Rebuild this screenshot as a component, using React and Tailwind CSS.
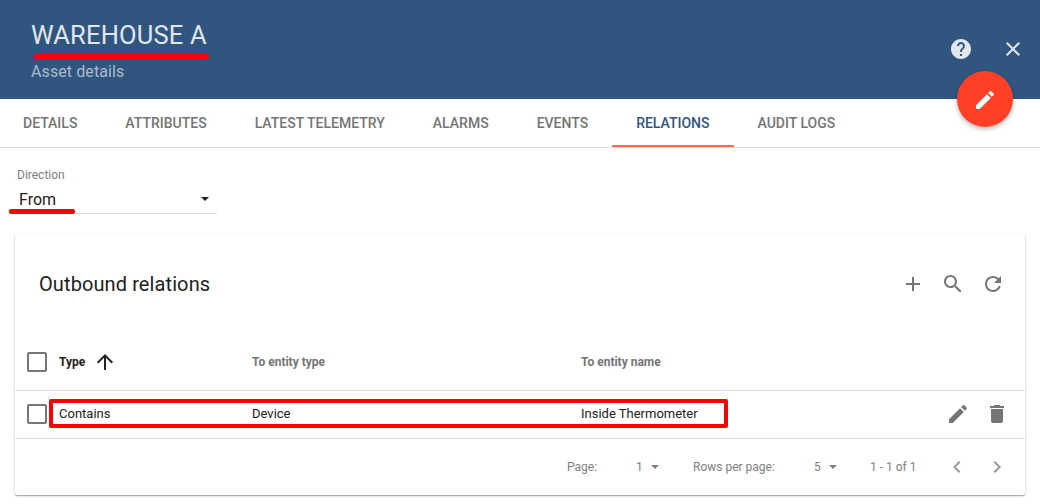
const paths = {
  help: 'M12 2C6.48 2 2 6.48 2 12s4.48 10 10 10 10-4.480 10-10S17.520 2 12 2zm1 17h-2v-2h2v2zm2.070-7.750l-.9.920C13.450 12.900 13 13.500 13 15h-2v-.5c0-1.100.450-2.100 1.170-2.830l1.240-1.260c.370-.360.590-.860.590-1.410 0-1.100-.9-2-2-2s-2 .9-2 2H8c0-2.210 1.790-4 4-4s4 1.790 4 4c0 .880-.360 1.680-.930 2.250z',
  close: 'M19 6.410L17.590 5 12 10.590 6.410 5 5 6.410 10.590 12 5 17.590 6.410 19 12 13.410 17.590 19 19 17.590 13.410 12z',
  edit: 'M3 17.250V21h3.750L17.810 9.940l-3.750-3.750L3 17.250zM20.710 7.040c.390-.390.390-1.020 0-1.410l-2.340-2.340c-.390-.390-1.020-.390-1.410 0l-1.830 1.830 3.750 3.750 1.830-1.830z',
  add: 'M19 13h-6v6h-2v-6H5v-2h6V5h2v6h6v2z',
  search: 'M15.5 14h-.79l-.28-.27C15.41 12.59 16 11.11 16 9.5 16 5.91 13.09 3 9.5 3S3 5.91 3 9.5 5.91 16 9.5 16c1.61 0 3.09-.59 4.23-1.57l.27.28v.79l5 4.99L20.49 19l-4.99-5zm-6 0C7.01 14 5 11.99 5 9.5S7.01 5 9.5 5 14 7.01 14 9.5 11.99 14 9.5 14z',
  refresh: 'M17.65 6.35C16.2 4.9 14.21 4 12 4c-4.42 0-7.99 3.58-7.99 8s3.57 8 7.99 8c3.73 0 6.84-2.55 7.73-6h-2.08c-.82 2.33-3.04 4-5.65 4-3.31 0-6-2.69-6-6s2.69-6 6-6c1.66 0 3.14.69 4.22 1.78L13 11h7V4l-2.35 2.35z',
  del: 'M6 19c0 1.1.9 2 2 2h8c1.1 0 2-.9 2-2V7H6v12zM19 4h-3.500l-1-1h-5l-1 1H5v2h14V4z',
  up: 'M4 12l1.410 1.410L11 7.830V20h2V7.830l5.580 5.590L20 12l-8-8-8 8z',
  left: 'M15.410 7.410L14 6l-6 6 6 6 1.410-1.410L10.830 12z',
  right: 'M10 6L8.590 7.410 13.170 12l-4.580 4.590L10 18l6-6z',
};

function Icon({ name, className = 'size-6' }) {
  return (
    <svg viewBox="0 0 24 24" fill="currentColor" className={`shrink-0 ${className}`}>
      <path d={paths[name]} />
    </svg>
  );
}

function Caret() {
  return (
    <svg viewBox="0 0 8 4" fill="currentColor" className="h-1 w-2 shrink-0">
      <path d="M0 0h8L4 4z" />
    </svg>
  );
}

function Checkbox() {
  return <span className="size-5 shrink-0 rounded-[2px] border-2 border-[#757575]" />;
}

const tabs = ['DETAILS', 'ATTRIBUTES', 'LATEST TELEMETRY', 'ALARMS', 'EVENTS', 'RELATIONS', 'AUDIT LOGS'];

export default function App() {
  return (
    <div className="h-[504px] w-[1040px] overflow-hidden bg-white font-['Roboto',sans-serif] text-[#212121]">
      <header className="relative flex h-[99px] justify-between bg-[#305680] pl-[31px] pr-[15px]">
        <div className="flex flex-col pt-[19px]">
          <h1 className="relative text-[25.500px] leading-8 tracking-[0.18px] text-[#e0e6ec]">
            WAREHOUSE A
            <span className="absolute left-[3px] top-[35px] h-[5px] w-[175px] rounded-[2px] bg-[#ff0000]" />
          </h1>
          <p className="mt-[11px] text-base leading-5 tracking-[0.1px] text-[#acbbcc]">Asset details</p>
        </div>
        <div className="flex items-center gap-7 pb-0.5 text-[#e0e6ec]">
          <Icon name="help" />
          <Icon name="close" />
        </div>
        <button className="absolute right-[27px] top-[71px] flex size-14 items-center justify-center rounded-full bg-[#ff4026] pt-0.5 text-white shadow-[0_2px_5px_rgba(0,0,0,0.3)]">
          <Icon name="edit" />
        </button>
      </header>

      <nav className="flex h-[49px] border-b border-[#dddddd] text-sm font-medium">
        {tabs.map((t, i) => (
          <div
            key={t}
            className={`flex items-center ${i === 0 ? 'pl-[23px] pr-6' : 'px-6'} ${
              t === 'RELATIONS' ? 'border-b-2 border-[#ff6e4c] pt-0.5 text-[#305680]' : 'text-[#757575]'
            }`}
          >
            {t}
          </div>
        ))}
      </nav>

      <section className="flex h-[86px] flex-col pl-[9px] pt-[19px]">
        <label className="pl-2 text-xs leading-4 text-[#808080]">Direction</label>
        <div className="relative flex h-[31px] w-[208px] items-center justify-between pl-[10px] pr-2 pt-[3px]">
          <span className="text-base">From</span>
          <span className="pb-0.5"><Caret /></span>
          <span className="absolute bottom-0 left-2 right-0 h-px bg-[#dddddd]" />
          <span className="absolute bottom-0 left-0 h-[5px] w-[66px] rounded-[2px] bg-[#ff0000]" />
        </div>
      </section>

      <main className="ml-[15px] h-[261px] w-[1010px] rounded-[2px] bg-white shadow-[0_1px_3px_rgba(0,0,0,0.2),0_1px_1px_rgba(0,0,0,0.14),0_2px_1px_-1px_rgba(0,0,0,0.12)]">
        <div className="flex h-[100px] items-center justify-between pl-6 pr-5">
          <h2 className="text-xl tracking-[0.1px]">Outbound relations</h2>
          <div className="flex gap-4 text-[#757575]">
            <Icon name="add" />
            <Icon name="search" />
            <Icon name="refresh" />
          </div>
        </div>

        <div className="flex h-[57px] items-center border-b border-[#dddddd] pl-3 text-xs font-bold text-[#757575]">
          <Checkbox />
          <div className="flex w-[205px] items-center gap-2 pl-3 text-[#212121]">
            Type
            <Icon name="up" />
          </div>
          <div className="w-[329px]">To entity type</div>
          <div>To entity name</div>
        </div>

        <div className="relative flex h-12 items-center border-b border-[#dddddd] pb-px pl-3 pr-4 text-[13px]">
          <Checkbox />
          <div className="w-[205px] pl-3">Contains</div>
          <div className="w-[329px]">Device</div>
          <div>Inside Thermometer</div>
          <div className="ml-auto flex gap-[15px] text-[#757575]">
            <Icon name="edit" />
            <Icon name="del" />
          </div>
          <span className="absolute left-[34px] top-2 h-[29px] w-[679px] rounded-[2px] border-4 border-[#ff0000]" />
        </div>

        <footer className="flex h-14 items-center pr-4 text-xs text-[#808080]">
          <span className="ml-[552px] w-[69px] shrink-0">Page:</span>
          <span className="flex w-[57px] items-center gap-2">1 <Caret /></span>
          <span className="w-[121px]">Rows per page:</span>
          <span className="flex w-[56px] items-center gap-2">5 <Caret /></span>
          <span>1 - 1 of 1</span>
          <span className="ml-auto flex gap-4 text-[#999999]">
            <Icon name="left" />
            <Icon name="right" />
          </span>
        </footer>
      </main>
    </div>
  );
}
